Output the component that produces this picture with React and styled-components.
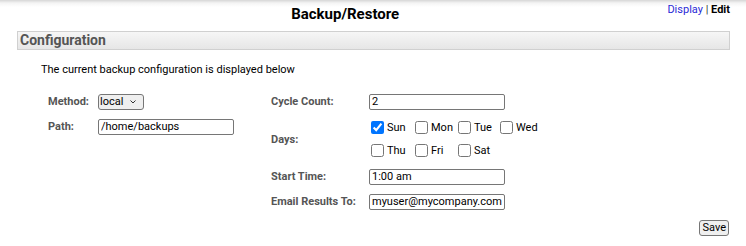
import React from 'react';
import styled, { createGlobalStyle } from 'styled-components';

const GlobalStyle = createGlobalStyle`
  body {
    margin:0;
    font-family:Roboto, "Liberation Sans", Arial, sans-serif;
    font-size:11px;
    color:#000;
    background:#fff;
  }
`

const Page = styled.div`
  background:linear-gradient(to bottom, #d6d6d6 0, #f4f4f4 3px, #fff 7px);
  padding:0 16px 0 17px;
`

const Header = styled.div`
  display:flex;
  height:31px;
`

const Title = styled.h1`
  flex:1;
  margin:0;
  padding:6px 0 0 6px;
  text-align:center;
  font-size:15px;
  font-weight:bold;
  line-height:17px;
`

const Links = styled.div`
  padding-top:3px;
  font-size:11px;
  line-height:13px;
  color:#333;
  a {
    color:#2a2ad6;
    text-decoration:none;
  }
  b {
    color:#000;
  }
`

const SectionBar = styled.div`
  height:17px;
  border:1px solid #d0d0d0;
  background:linear-gradient(to bottom, #f6f6f6, #e6e6e6);
  color:#555;
  font-size:14px;
  font-weight:bold;
  line-height:17px;
  padding-left:2px;
`

const Intro = styled.p`
  margin:13px 0 0 24px;
  line-height:13px;
`

const Form = styled.div`
  display:flex;
  margin-top:13px;
  padding-left:31px;
`

const Column = styled.div`
  display:grid;
  grid-template-columns:${p => p.$label}px auto;
  grid-auto-rows:25px;
  align-items:center;
  align-content:start;
  width:${p => p.$width ? p.$width + 'px' : 'auto'};
`

const Label = styled.div`
  font-weight:bold;
  color:#555;
  grid-row:span ${p => p.$span || 1};
`

const Field = styled.div`
  grid-row:span ${p => p.$span || 1};
  display:flex;
  align-items:center;
`

const TextInput = styled.input`
  box-sizing:border-box;
  width:136px;
  height:16px;
  padding:0 2px;
  border:1px solid #767676;
  border-radius:2px;
  font-family:inherit;
  font-size:11px;
  color:#000;
`

const SelectWrap = styled.div`
  position:relative;
  width:46px;
  height:16px;
  svg {
    position:absolute;
    right:8px;
    top:6px;
    pointer-events:none;
  }
`

const Select = styled.select`
  appearance:none;
  box-sizing:border-box;
  width:46px;
  height:16px;
  padding:0 0 0 1px;
  border:1px solid #767676;
  border-radius:3px;
  background:#efefef;
  font-family:inherit;
  font-size:11px;
  line-height:14px;
  color:#000;
`

const Days = styled.div`
  display:grid;
  grid-template-columns:44px 43px 42px auto;
  grid-auto-rows:23px;
  align-items:center;
`

const Day = styled.label`
  display:flex;
  align-items:center;
  color:#000;
  input {
    width:13px;
    height:13px;
    margin:0 3px 0 2px;
  }
`

const Footer = styled.div`
  display:flex;
  justify-content:flex-end;
  margin-top:6px;
  padding-right:1px;
`

const Button = styled.button`
  font-family:inherit;
  font-size:11px;
  line-height:12px;
  padding:1px 2px;
  border:1px solid #767676;
  border-radius:3px;
  background:#efefef;
  color:#000;
`

const dayRows = ['Sun', 'Mon', 'Tue', 'Wed', 'Thu', 'Fri', 'Sat'];

export default function App() {
  return (
    <Page>
      <GlobalStyle />
      <Header>
        <Title>Backup/Restore</Title>
        <Links><a href='#'>Display</a> | <b>Edit</b></Links>
      </Header>
      <SectionBar>Configuration</SectionBar>
      <Intro>The current backup configuration is displayed below</Intro>
      <Form>
        <Column $label={50} $width={223}>
          <Label>Method:</Label>
          <Field>
            <SelectWrap>
              <Select defaultValue='local'>
                <option value='local'>local</option>
                <option value='remote'>remote</option>
              </Select>
              <svg width='6' height='4' viewBox='0 0 6 4'>
                <path d='M0.5 0.5 L3 3 L5.5 0.5' fill='none' stroke='#333' strokeWidth='1' />
              </svg>
            </SelectWrap>
          </Field>
          <Label>Path:</Label>
          <Field><TextInput defaultValue='/home/backups' /></Field>
        </Column>
        <Column $label={98}>
          <Label>Cycle Count:</Label>
          <Field><TextInput defaultValue='2' /></Field>
          <Label $span={2}>Days:</Label>
          <Field $span={2}>
            <Days>
              {dayRows.map(d => (
                <Day key={d}>
                  <input type='checkbox' defaultChecked={d === 'Sun'} />
                  {d}
                </Day>
              ))}
            </Days>
          </Field>
          <Label>Start Time:</Label>
          <Field><TextInput defaultValue='1:00 am' /></Field>
          <Label>Email Results To:</Label>
          <Field><TextInput defaultValue='myuser@mycompany.com' /></Field>
        </Column>
      </Form>
      <Footer>
        <Button>Save</Button>
      </Footer>
    </Page>
  );
}
